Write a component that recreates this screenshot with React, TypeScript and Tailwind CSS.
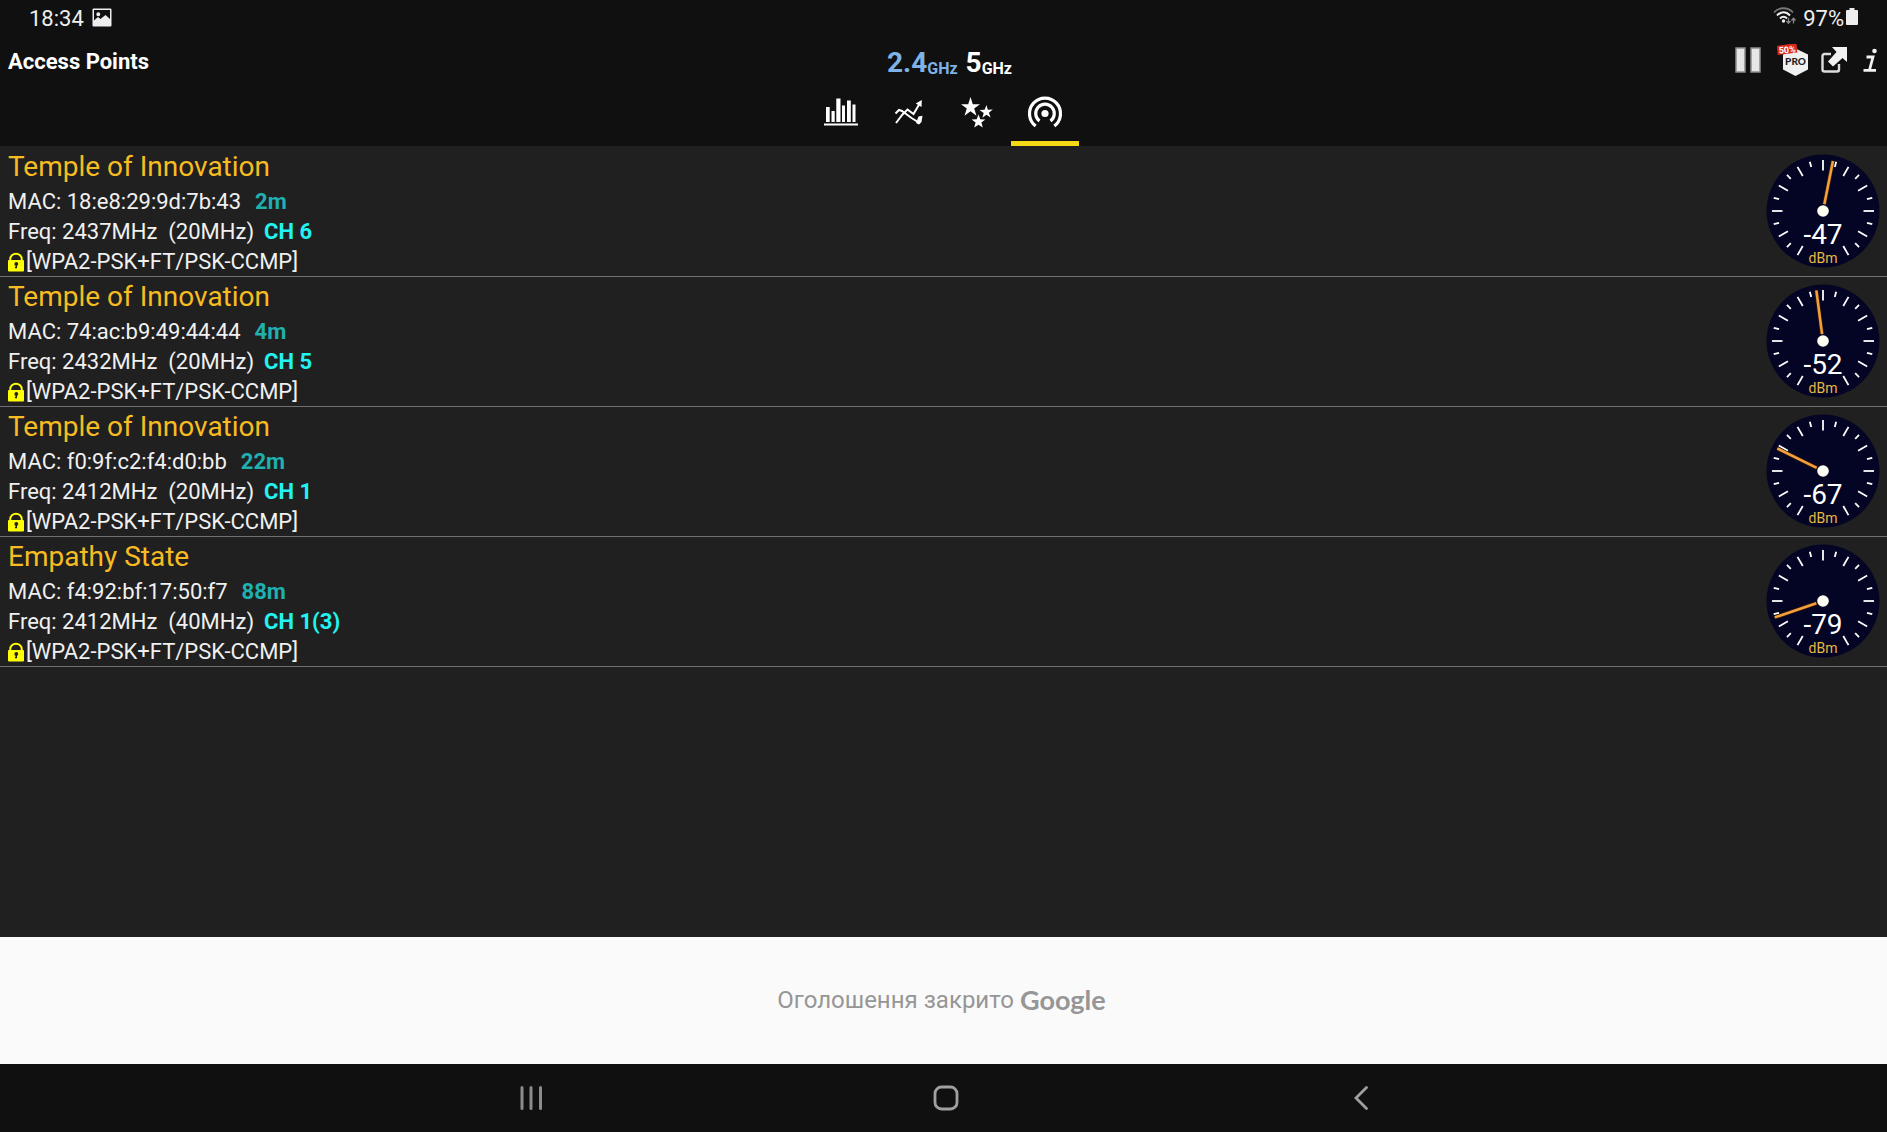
import { useState } from "react";
import type { ReactNode } from "react";

type AccessPoint = {
  ssid: string;
  mac: string;
  distance: string;
  freq: string;
  width: string;
  channel: string;
  security: string;
  level: number;
};

const accessPoints: AccessPoint[] = [
  { ssid: "Temple of Innovation", mac: "18:e8:29:9d:7b:43", distance: "2m", freq: "2437MHz", width: "20MHz", channel: "CH 6", security: "[WPA2-PSK+FT/PSK-CCMP]", level: -47 },
  { ssid: "Temple of Innovation", mac: "74:ac:b9:49:44:44", distance: "4m", freq: "2432MHz", width: "20MHz", channel: "CH 5", security: "[WPA2-PSK+FT/PSK-CCMP]", level: -52 },
  { ssid: "Temple of Innovation", mac: "f0:9f:c2:f4:d0:bb", distance: "22m", freq: "2412MHz", width: "20MHz", channel: "CH 1", security: "[WPA2-PSK+FT/PSK-CCMP]", level: -67 },
  { ssid: "Empathy State", mac: "f4:92:bf:17:50:f7", distance: "88m", freq: "2412MHz", width: "40MHz", channel: "CH 1(3)", security: "[WPA2-PSK+FT/PSK-CCMP]", level: -79 },
];

// dial ticks every 15 degrees, long ones every 30, open at the bottom
const ticks = Array.from({ length: 21 }, (_, i) => -150 + i * 15);

function Gauge({ level }: { level: number }) {
  const angle = (level + 50) * 3.75;
  return (
    <svg className="mb-0.5 size-[114px] shrink-0" viewBox="-57 -57 114 114" role="img" aria-label={`${level} dBm`}>
      <circle r="56.5" fill="#040424" />
      {ticks.map((deg) => (
        <line
          key={deg}
          y1="-51"
          y2={deg % 30 === 0 ? -40.5 : -45.5}
          stroke="#fff"
          strokeWidth="1.8"
          transform={`rotate(${deg})`}
        />
      ))}
      <g transform={`rotate(${angle})`}>
        <line y1="-51" y2="-7" stroke="#3a1c08" strokeWidth="4" />
        <line y1="-51" y2="-7" stroke="#f2a03c" strokeWidth="2.6" />
      </g>
      <circle r="5.8" fill="#fffff4" />
      <text y="33" textAnchor="middle" fontSize="28" fill="#fff">
        {level}
      </text>
      <text y="52" textAnchor="middle" fontSize="14" fill="#e8b840">
        dBm
      </text>
    </svg>
  );
}

function LockIcon() {
  return (
    <svg className="h-5 w-4 shrink-0" viewBox="0 0 17 20">
      <path d="M2.400 9V6.800a6.100 5.600 0 0 1 12.200 0V9" fill="none" stroke="#ffff00" strokeWidth="2" />
      <rect y="8" width="17" height="12" rx="1" fill="#ffff00" />
      <circle cx="8.800" cy="12" r="2" fill="#202020" />
      <path d="M8 12h1.600v4.600H7.400v-1.300H8z" fill="#202020" />
    </svg>
  );
}

function AccessPointRow({ ap }: { ap: AccessPoint }) {
  return (
    <li className="flex h-[130px] items-center justify-between border-b border-[#707070] pr-[7px] pl-2">
      <div className="pt-1 text-[22px] leading-[30px] text-[#f0f0f0]">
        <h2 className="mb-1 text-[28px] leading-8 text-[#f6bc22]">{ap.ssid}</h2>
        <p>
          MAC: {ap.mac}
          <span className="ml-3.5 font-bold text-[#1fb0b0]">{ap.distance}</span>
        </p>
        <p className="whitespace-pre">
          Freq: {ap.freq}  ({ap.width})
          <span className="ml-2.5 font-bold text-[#22f2f2]">{ap.channel}</span>
        </p>
        <p className="flex items-center gap-0.5">
          <LockIcon />
          {ap.security}
        </p>
      </div>
      <Gauge level={ap.level} />
    </li>
  );
}

function PictureIcon() {
  return (
    <svg className="size-5" viewBox="0 0 20 20">
      <path
        fillRule="evenodd"
        fill="#eee"
        d="M1.5.5h17a1 1 0 0 1 1 1v16a1 1 0 0 1-1 1h-17a1 1 0 0 1-1-1v-16a1 1 0 0 1 1-1zM2 2v10.5l4-3.5 2.5 2 5-4 4.5 4V2zM6.3 4.2a2 2 0 1 1 0 4 2 2 0 0 1 0-4z"
      />
    </svg>
  );
}

function WifiStatusIcon() {
  return (
    <svg className="h-[18px] w-6" viewBox="0 0 24 18" fill="none">
      <path d="M1 5.500C6-.2 15-.2 20 5.500" stroke="#777" strokeWidth="1.800" />
      <path d="M4 8.500c4-4.200 9-4.200 13 0" stroke="#eee" strokeWidth="2" />
      <path d="M7 11.500c2.200-2.400 4.800-2.400 7 0" stroke="#eee" strokeWidth="2" />
      <circle cx="10.500" cy="14" r="1.700" fill="#eee" />
      <path d="M15.500 11v5M13.500 14l2 2.300 2-2.300M20.500 16.500v-5M18.500 13.500l2-2.300 2 2.300" stroke="#888" strokeWidth="1.300" />
    </svg>
  );
}

function BatteryIcon() {
  return (
    <svg className="h-[17px] w-3" viewBox="0 0 12 17">
      <path d="M3.500 0h5v2H11a1 1 0 0 1 1 1v13a1 1 0 0 1-1 1H1a1 1 0 0 1-1-1V3a1 1 0 0 1 1-1h2.500z" fill="#eee" />
    </svg>
  );
}

function StatusBar() {
  return (
    <div className="flex h-9 items-center justify-between px-[29px] text-[22px] text-[#eee]">
      <div className="flex items-center gap-2">
        <span>18:34</span>
        <PictureIcon />
      </div>
      <div className="flex items-center">
        <span className="pb-1">
          <WifiStatusIcon />
        </span>
        <span className="ml-1.5">97%</span>
        <span className="ml-0.5 pb-1">
          <BatteryIcon />
        </span>
      </div>
    </div>
  );
}

function PauseIcon() {
  return (
    <svg className="h-[26px] w-[26px]" viewBox="0 0 26 26">
      <path d="M1 1h9v24H1zM16 1h9v24h-9z" fill="#e6e6e6" stroke="#8c8c8c" strokeWidth="1.500" />
    </svg>
  );
}

function ProIcon() {
  return (
    <svg className="h-8 w-8" viewBox="0 0 32 32">
      <path d="M18.500 4.500 31 10.500v15l-12.500 6.500L6 25.500v-15z" fill="#f0f0f0" />
      <path d="M0 2 19.500-1l.8 9.500L.8 11z" fill="#dc2a1c" />
      <text x="2" y="9.500" fontSize="9" fontWeight="700" fill="#fff" transform="rotate(-4 2 10)">
        50%
      </text>
      <text x="18.500" y="21" textAnchor="middle" fontSize="10" fontWeight="900" fill="#222" fontFamily="Lato">
        PRO
      </text>
    </svg>
  );
}

function ShareIcon() {
  return (
    <svg className="size-[26px]" viewBox="0 0 26 26">
      <path d="M10 7H3.500a2 2 0 0 0-2 2v13.500a2 2 0 0 0 2 2H16a2 2 0 0 0 2-2V17" fill="none" stroke="#dcdcdc" strokeWidth="2.400" />
      <path d="M11 0h15v15l-4.500-4L12 19.500 7 14.500 15.500 5z" fill="#f2f2f2" />
    </svg>
  );
}

function InfoIcon() {
  return (
    <svg className="h-6 w-4" viewBox="0 0 16 24" fill="none" stroke="#f2f2f2">
      <path d="M3.500 9H10L6.500 22M.5 22.300H13" strokeWidth="2.800" />
      <circle cx="11.500" cy="3" r="2.300" fill="#f2f2f2" stroke="none" />
    </svg>
  );
}

function BarsIcon() {
  return (
    <svg className="h-8 w-9" viewBox="0 0 36 32" fill="#fff">
      <path d="M3 11h3.700v15H3zM8.500 15h3.200v11H8.500zM13.300 2.500h4.200V26h-4.200zM19 9.500h3V26h-3zM24 4.500h3.800V26H24zM29.500 8.500h3V26h-3zM1 27.500h34v2H1z" />
    </svg>
  );
}

function GraphIcon() {
  return (
    <svg className="h-8 w-9" viewBox="0 0 36 32" fill="none" stroke="#fff" strokeWidth="2">
      <path d="M4.500 17.500 8 14l3 1 9.500 7 6.500 4M5 27l6.500-8.500 5-5 6 4.500 6.500-11" />
      <path d="m24.800 7.500 6-3.500-.3 7zM27.500 20.500l4-.8-1 6.300-2.500 2.500-3-1.500z" fill="#fff" stroke="none" />
    </svg>
  );
}

function StarsIcon() {
  return (
    <svg className="h-8 w-9" viewBox="0 0 36 32" fill="#fff">
      <path d="m11.500 1 2.300 7.200h7.200l-5.800 4.300 2.300 7.200-6-4.400-6 4.400 2.300-7.200L2 8.200h7.200z" />
      <path d="m27.500 9 1.300 4.700 5-.2-3.900 3.200 1.700 4.800-4.200-2.700-4 3 1.300-4.900-4.200-2.900 5.100-.3z" />
      <path d="m19.500 18.500 1.800 4.800 5.100.2-4 3.100 1.400 4.900-4.300-2.800-4.300 2.800 1.400-4.900-4-3.100 5.100-.2z" />
    </svg>
  );
}

function RadarIcon() {
  return (
    <svg className="h-8 w-9" viewBox="0 0 36 32" fill="none" stroke="#fff" strokeWidth="3.200">
      <path d="M8.700 30A15.500 15.500 0 1 1 27.300 30" />
      <path d="M12.500 25A9.300 9.300 0 1 1 23.500 25" />
      <circle cx="18" cy="17.500" r="3.600" fill="#fff" stroke="none" />
    </svg>
  );
}

const tabs: { id: string; label: string; icon: ReactNode }[] = [
  { id: "channels", label: "Channels", icon: <BarsIcon /> },
  { id: "graph", label: "Signal graph", icon: <GraphIcon /> },
  { id: "rating", label: "Channel rating", icon: <StarsIcon /> },
  { id: "points", label: "Access points", icon: <RadarIcon /> },
];

function Header() {
  const [active, setActive] = useState("points");
  return (
    <header className="bg-[#101010]">
      <StatusBar />
      <div className="grid h-[50px] grid-cols-[1fr_auto_1fr] items-center px-2">
        <h1 className="text-[22px] font-bold">Access Points</h1>
        <div className="flex gap-2 pt-1 pl-3 text-[28px] font-bold">
          <button className="text-[#7fb2e5]">
            2.4<sub className="bottom-[-2px] align-baseline text-base">GHz</sub>
          </button>
          <button>
            5<sub className="bottom-[-2px] align-baseline text-base">GHz</sub>
          </button>
        </div>
        <div className="flex items-center justify-end pb-0.5">
          <button aria-label="Pause"><PauseIcon /></button>
          <button className="ml-4" aria-label="Pro version"><ProIcon /></button>
          <button className="ml-3" aria-label="Share"><ShareIcon /></button>
          <button className="ml-4" aria-label="Info"><InfoIcon /></button>
        </div>
      </div>
      <nav className="flex h-[60px] justify-center pr-px" role="tablist">
        {tabs.map((tab) => (
          <button
            key={tab.id}
            role="tab"
            aria-label={tab.label}
            aria-selected={tab.id === active}
            onClick={() => setActive(tab.id)}
            className={`flex w-[68px] justify-center border-b-[5px] pt-2.5 ${tab.id === active ? "border-[#f5d916]" : "border-transparent"}`}
          >
            {tab.icon}
          </button>
        ))}
      </nav>
    </header>
  );
}

function SystemNav() {
  return (
    <nav className="flex h-[68px] items-center justify-center bg-[#101010] pl-[5px]">
      <button className="flex w-[415px] justify-center" aria-label="Recent apps">
        <svg className="size-[26px]" viewBox="0 0 26 26" stroke="#8c8c8c" strokeWidth="3" strokeLinecap="round">
          <path d="M4 2.500v21M13 2.500v21M22.500 2.500v21" />
        </svg>
      </button>
      <button className="flex w-[415px] justify-center" aria-label="Home">
        <svg className="size-[26px]" viewBox="0 0 26 26" fill="none" stroke="#a0a0a0" strokeWidth="2.800">
          <rect x="2" y="2" width="22" height="22" rx="6.500" />
        </svg>
      </button>
      <button className="flex w-[415px] justify-center" aria-label="Back">
        <svg className="size-[26px]" viewBox="0 0 26 26" fill="none" stroke="#a0a0a0" strokeWidth="2.800" strokeLinecap="round">
          <path d="M18.500 2.500 8 13l10.500 10.500" />
        </svg>
      </button>
    </nav>
  );
}

export default function App() {
  return (
    <div className="flex min-h-screen flex-col bg-[#202020] font-[Roboto,sans-serif] text-white">
      <Header />
      <main className="flex-1">
        <ul className="pt-px">
          {accessPoints.map((ap) => (
            <AccessPointRow key={ap.mac} ap={ap} />
          ))}
        </ul>
      </main>
      <aside className="flex h-[127px] items-center justify-center gap-1.5 bg-[#fafafa] pr-1 pb-0.5 text-2xl text-[#969696]">
        <span>Оголошення закрито</span>
        <span className="font-[Lato,sans-serif] text-[27px] font-bold">Google</span>
      </aside>
      <SystemNav />
    </div>
  );
}
